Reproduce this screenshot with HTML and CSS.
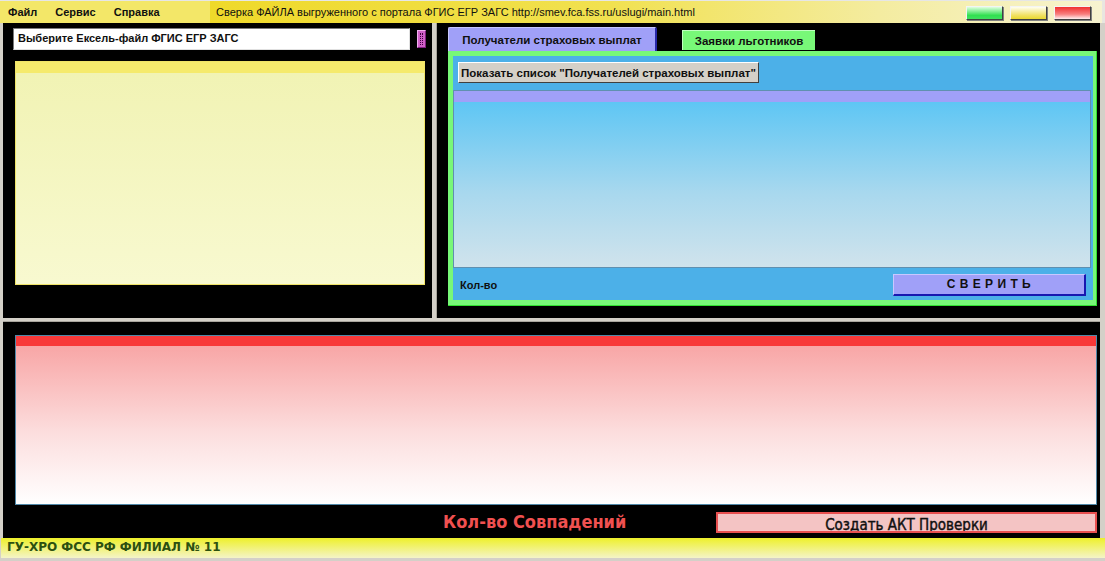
FILE: index.html
```html
<!DOCTYPE html>
<html lang="ru">
<head>
<meta charset="utf-8">
<title>Сверка ФАЙЛА</title>
<link rel="stylesheet" href="styles.css">
</head>
<body>
<div class="window">
  <div class="titlebar">
    <div class="menu">
      <span class="menu-item">Файл</span>
      <span class="menu-item">Сервис</span>
      <span class="menu-item">Справка</span>
    </div>
    <div class="title">
      <span class="title-text">Сверка ФАЙЛА выгруженного с портала ФГИС ЕГР ЗАГС http://smev.fca.fss.ru/uslugi/main.html</span>
      <div class="winbtns">
        <span class="wbtn wbtn-green"></span>
        <span class="wbtn wbtn-yellow"></span>
        <span class="wbtn wbtn-red"></span>
      </div>
    </div>
  </div>

  <div class="main">
    <div class="top">
      <div class="left">
        <div class="filerow">
          <div class="fileinput">Выберите Ексель-файл ФГИС ЕГР ЗАГС</div>
          <div class="filebtn"><span class="filebtn-dots"></span></div>
        </div>
        <div class="grid grid-yellow">
          <div class="grid-head"></div>
          <div class="grid-body"></div>
        </div>
      </div>
      <div class="vsplit"></div>
      <div class="right">
        <div class="tabs">
          <div class="tab tab-active">Получатели страховых выплат</div>
          <div class="tab tab-green">Заявки льготников</div>
        </div>
        <div class="tabpage">
          <div class="tabinner">
            <div class="btnrow">
              <button class="btn-gray">Показать список "Получателей страховых выплат"</button>
            </div>
            <div class="grid grid-blue">
              <div class="grid-head"></div>
              <div class="grid-body"></div>
            </div>
            <div class="tabfoot">
              <span class="count">Кол-во</span>
              <button class="btn-check">С В Е Р И Т Ь</button>
            </div>
          </div>
        </div>
      </div>
    </div>
    <div class="hsplit"></div>
    <div class="bottom">
      <div class="grid grid-red">
        <div class="grid-head"></div>
        <div class="grid-body"></div>
      </div>
      <div class="bottomfoot">
        <span class="matches">Кол-во Совпадений</span>
        <button class="btn-act"><span class="btn-act-label">Создать АКТ Проверки</span></button>
      </div>
    </div>
  </div>

  <div class="statusbar">ГУ-ХРО ФСС РФ ФИЛИАЛ № 11</div>
</div>
</body>
</html>
```

FILE: styles.css
```css
* { box-sizing: border-box; }
html, body { margin: 0; padding: 0; }
body {
  width: 1105px;
  height: 561px;
  overflow: hidden;
  background: #d4d0c8;
  font-family: "Liberation Sans", Arial, sans-serif;
}
.window {
  width: 1105px;
  height: 561px;
  display: flex;
  flex-direction: column;
  background: #d4d0c8;
  border-top: 1px solid #e6e6e6;
  border-bottom: 3px solid #d4d0c8;
}

/* title bar */
.titlebar {
  height: 22px;
  display: flex;
  flex-shrink: 0;
}
.menu {
  width: 210px;
  background: #f3e768;
  display: flex;
  align-items: center;
  padding-left: 8px;
  gap: 18px;
  font-size: 11px;
  font-weight: bold;
  color: #101010;
}
.title {
  flex: 1;
  display: flex;
  align-items: center;
  background: linear-gradient(to right, #efd92a 0%, #f1e150 45%, #f4eca0 75%, #f7f3d0 100%);
  padding-left: 6px;
  border-right: 3px solid #e8e6e0;
}
.title-text {
  font-size: 11px;
  color: #101010;
  flex: 1;
  white-space: nowrap;
}
.winbtns {
  display: flex;
  gap: 7px;
  padding-right: 11px;
  padding-top: 1px;
}
.wbtn {
  width: 37px;
  height: 14px;
  border: 1px solid;
  border-color: #f4f4f4 #404040 #404040 #f4f4f4;
  box-shadow: 1px 1px 0 #808080;
}
.wbtn-green { background: linear-gradient(#e0ffe0, #30e050 70%, #40e060); }
.wbtn-yellow { background: linear-gradient(#fffff0, #f0e060 70%, #e8d830); }
.wbtn-red { background: linear-gradient(#f03030, #f88080 60%, #fff0f0); }

/* main */
.main {
  flex: 1;
  background: #000;
  display: flex;
  flex-direction: column;
  border-left: 3px solid #d4d0c8;
  border-right: 5px solid #d4d0c8;
}
.top {
  height: 295px;
  display: flex;
}
.left {
  width: 429px;
  padding: 5px 0 0 10px;
  display: flex;
  flex-direction: column;
}
.filerow {
  display: flex;
  align-items: center;
  gap: 7px;
  height: 22px;
}
.fileinput {
  width: 397px;
  height: 22px;
  background: #fff;
  border: 1px solid #7a7a7a;
  border-right-color: #e0e0e0;
  border-bottom-color: #e0e0e0;
  font-size: 11px;
  font-weight: bold;
  color: #101010;
  padding: 3px 0 0 4px;
}
.filebtn {
  width: 9px;
  height: 18px;
  background: #d060c8;
  border: 1px solid #f0b0f0;
  border-right-color: #802080;
  border-bottom-color: #802080;
  display: flex;
  justify-content: center;
  padding-top: 2px;
}
.filebtn-dots {
  width: 3px;
  height: 12px;
  border: 1px dotted #400040;
}
.grid {
  display: flex;
  flex-direction: column;
}
.grid-yellow {
  margin: 11px 0 0 2px;
  width: 410px;
  height: 224px;
  border: 1px solid #f0e468;
}
.grid-yellow .grid-head { height: 11px; background: #f5ea6c; }
.grid-yellow .grid-body { flex: 1; background: linear-gradient(#f1f3b4, #f8f9d0); }

.vsplit {
  width: 5px;
  background: #d4d0c8;
  border-right: 1px solid #a8a49c;
}

.right {
  flex: 1;
  padding: 4px 3px 12px 11px;
  display: flex;
  flex-direction: column;
}
.tabs {
  display: flex;
  align-items: flex-end;
  gap: 25px;
  height: 24px;
}
.tab {
  font-size: 11.5px;
  font-weight: bold;
  color: #101010;
  display: flex;
  align-items: center;
  justify-content: center;
}
.tab-active {
  width: 209px;
  height: 24px;
  background: #a0a0f8;
  border-top: 1px solid #c8c8ff;
  border-left: 1px solid #c8c8ff;
  border-right: 2px solid #2828a8;
  border-radius: 2px 2px 0 0;
}
.tab-green {
  width: 133px;
  height: 20px;
  background: #78f878;
  border-top: 1px solid #c0ffc0;
  border-left: 1px solid #c0ffc0;
  margin-bottom: 1px;
}
.tabpage {
  flex: 1;
  background: #78f878;
  border-right: 1px solid #30e030;
  border-bottom: 1px solid #30e030;
  padding: 5px 3px 5px 5px;
  display: flex;
}
.tabinner {
  flex: 1;
  background: #4cb0e8;
  display: flex;
  flex-direction: column;
}
.btnrow {
  padding: 6px 0 0 5px;
  height: 34px;
}
.btn-gray {
  width: 301px;
  height: 21px;
  background: #d4d0c8;
  border: 1px solid;
  border-color: #ffffff #404040 #404040 #ffffff;
  font-family: "Liberation Sans", Arial, sans-serif;
  font-size: 11.5px;
  font-weight: bold;
  color: #101010;
  padding: 0;
  margin: 0;
}
.grid-blue {
  width: 638px;
  height: 178px;
  border: 1px solid #6090b0;
}
.grid-blue .grid-head { height: 11px; background: #a0a0f8; }
.grid-blue .grid-body { flex: 1; background: linear-gradient(#5ec6f4, #a8d8ee 55%, #d0e3ec); }
.tabfoot {
  flex: 1;
  display: flex;
  align-items: center;
  justify-content: space-between;
  padding: 0 7px 0 7px;
}
.count {
  font-size: 11px;
  font-weight: bold;
  color: #101010;
  margin-top: 1px;
}
.btn-check {
  width: 193px;
  height: 22px;
  background: #a0a0f8;
  border: 1px solid;
  border-color: #c8c8ff #1818b0 #1818b0 #c8c8ff;
  border-width: 1px 2px 2px 1px;
  font-family: "Liberation Sans", Arial, sans-serif;
  font-size: 12px;
  font-weight: bold;
  letter-spacing: 0.5px;
  color: #101010;
  padding: 0;
  margin: 1px 0 0 0;
}

.hsplit {
  height: 4px;
  background: #d4d0c8;
  border-bottom: 1px solid #a8a49c;
}
.bottom {
  flex: 1;
  display: flex;
  flex-direction: column;
  padding: 13px 0 0 12px;
}
.grid-red {
  width: 1082px;
  height: 170px;
  border: 1px solid #5088a8;
}
.grid-red .grid-head { height: 10px; background: #f83838; }
.grid-red .grid-body { flex: 1; background: linear-gradient(#f8a6a6, #fcdede 55%, #ffffff); }
.bottomfoot {
  display: flex;
  align-items: center;
  height: 33px;
}
.matches {
  margin-left: 428px;
  width: 273px;
  font-family: "DejaVu Sans Condensed", "DejaVu Sans", sans-serif;
  font-stretch: condensed;
  font-size: 18px;
  font-weight: bold;
  color: #f05050;
}
.btn-act {
  width: 381px;
  height: 21px;
  background: #f4c4c4;
  border: 2px solid #e85050;
  font-family: "DejaVu Sans Condensed", "DejaVu Sans", sans-serif;
  font-stretch: condensed;
  font-size: 15px;
  color: #101010;
  -webkit-text-stroke: 0.4px #101010;
  padding: 0;
  margin: 1px 0 0 0;
  overflow: hidden;
  line-height: 17px;
}
.btn-act-label {
  display: block;
  padding-top: 3px;
}

.statusbar {
  height: 20px;
  flex-shrink: 0;
  background: linear-gradient(#eef02a, #f4f4c8);
  font-family: "DejaVu Sans", sans-serif;
  font-size: 12px;
  font-weight: bold;
  color: #2c5010;
  padding: 2px 0 0 6px;
  border-left: 1px solid #d4d0c8;
}
```
